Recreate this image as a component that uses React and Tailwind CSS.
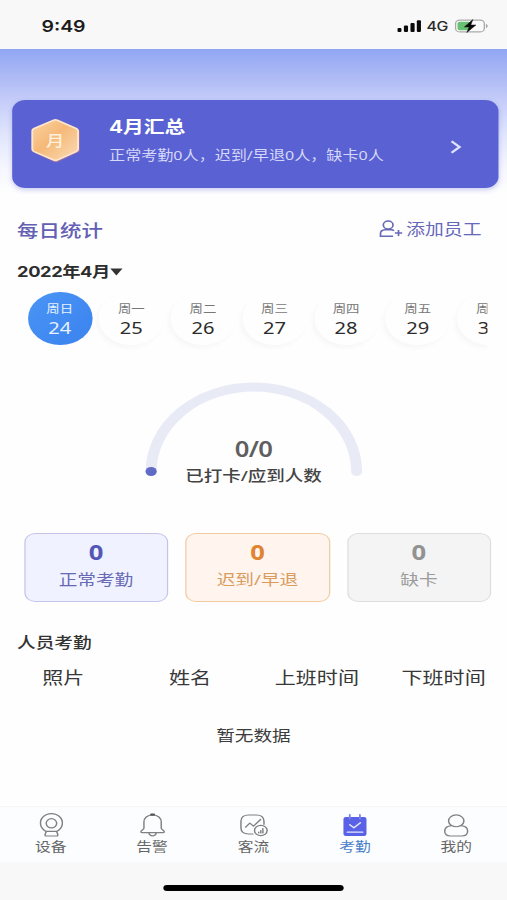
import React from "react";

const days = [
  ["周日", "24"],
  ["周一", "25"],
  ["周二", "26"],
  ["周三", "27"],
  ["周四", "28"],
  ["周五", "29"],
  ["周六", "30"],
];

const stats = [
  { n: "0", label: "正常考勤", box: "border-[#c3c4e6] bg-[#f0f2ff]", num: "text-[#5358b8]", text: "text-[#6769b5]" },
  { n: "0", label: "迟到/早退", box: "border-[#f0cba0] bg-[#fff4ee]", num: "text-[#e08432]", text: "text-[#d99c5e]" },
  { n: "0", label: "缺卡", box: "border-[#dedede] bg-[#f4f4f4]", num: "text-[#929292]", text: "text-[#9c9c9c]" },
];

function StatusBar() {
  return (
    <div className="flex h-[49px] shrink-0 items-center justify-between bg-[#f8f8f8] pt-[3px] pr-[15px] pl-[34px]">
      <span className="font-['Inter',sans-serif] text-[16px] font-semibold text-[#1c1c1c]">9:49</span>
      <div className="flex items-center">
        <svg width="20" height="12" viewBox="0 0 20 12" fill="#0a0a0a">
          <rect x="0" y="8" width="3.4" height="4" rx="1" />
          <rect x="5.4" y="5.5" width="3.4" height="6.5" rx="1" />
          <rect x="10.8" y="3" width="3.4" height="9" rx="1" />
          <rect x="16" y="0.3" width="3.4" height="11.7" rx="1" />
        </svg>
        <span className="ml-[4px] w-[18px] pt-px font-['Inter',sans-serif] text-[13px] leading-none font-medium tracking-[-0.3px] text-[#2a2a2a]">4G</span>
        <svg className="ml-[5px]" width="28" height="14" viewBox="0 0 28 14">
          <rect x="0.8" y="1.1" width="23.6" height="11.8" rx="3.4" fill="#fafafa" stroke="#a9a9a9" strokeWidth="1.1" />
          <rect x="2.4" y="2.7" width="11" height="8.6" rx="1.8" fill="#67c173" />
          <path d="M25.7 5v4c.9-.3 1.4-1.1 1.4-2s-.5-1.7-1.4-2z" fill="#a0a0a0" />
          <path d="M15 .6 8 8h4L10 13.6l7.5-7.6h-4.2z" fill="#0a0a0a" stroke="#0a0a0a" strokeWidth=".4" />
        </svg>
      </div>
    </div>
  );
}

function Hexagon() {
  return (
    <svg width="42" height="46" viewBox="0 0 42 46">
      <defs>
        <linearGradient id="hex" x1="0" y1="0" x2="1" y2="1">
          <stop offset="0" stopColor="#fbd3a2" />
          <stop offset="0.45" stopColor="#f5b978" />
          <stop offset="1" stopColor="#fbdcb8" />
        </linearGradient>
      </defs>
      <path d="M21 3 39.5 12q1 .5 1 2v18q0 1.5-1 2L22.5 44q-1.5.7-3 0L3.500 35z" fill="#b0708f" opacity=".75" />
      <path d="M19 2.300q1.500-.8 3 0L37.500 10.500q1.500.8 1.500 2.300v18.500q0 1.500-1.500 2.300L22 42q-1.500.8-3 0L3 33.600q-1.500-.8-1.500-2.300V12.800q0-1.500 1.500-2.300z" fill="url(#hex)" stroke="#fde6cb" strokeWidth="1.6" />
      <text x="20.2" y="28" textAnchor="middle" fontSize="15" fontWeight="500" fill="#fff0dc" fontFamily="'Noto Sans CJK SC', sans-serif">月</text>
    </svg>
  );
}

function SummaryCard() {
  return (
    <div className="mr-[7.5px] ml-[9.5px] flex h-[88px] shrink-0 items-center rounded-[11px] bg-[#5a61d2] pl-[15px] shadow-[0_2px_5px_rgba(90,97,210,0.3)]">
      <div className="-mt-[6px]">
        <Hexagon />
      </div>
      <div className="-mt-[8px] ml-[23px] flex flex-1 flex-col">
        <span className="font-['Inter','Noto_Sans_CJK_SC',sans-serif] text-[17px] leading-[26px] font-bold text-white">4月汇总</span>
        <span className="mt-[3px] text-[13.2px] leading-[24px] whitespace-nowrap text-[#d5d8f8]">正常考勤0人，迟到/早退0人，缺卡0人</span>
      </div>
      <svg className="mt-[5px] mr-[30px]" width="10" height="14" viewBox="0 0 10 14" fill="none" stroke="#dfe2fb" strokeWidth="2.2">
        <path d="M1.5 1.2 8 7l-6.5 5.8" />
      </svg>
    </div>
  );
}

function AddStaff() {
  return (
    <div className="flex items-center text-[#6668b8]">
      <svg className="-mt-[3px]" width="20" height="18" viewBox="0 0 20 18" fill="none" stroke="currentColor" strokeWidth="1.4">
        <circle cx="7.5" cy="5" r="4" />
        <path d="M11.5 16.3H1.2v-2.6q0-3.700 3.700-3.900l5 0q1.500.1 2.300 1M16 10v6M13 13h6" />
      </svg>
      <span className="ml-[2px] text-[15.4px] leading-[24px]">添加员工</span>
    </div>
  );
}

function DayStrip() {
  return (
    <div className="mr-[16px] ml-[22.5px] flex h-[64px] shrink-0 gap-[5.75px] overflow-hidden">
      {days.map(([w, d], i) => (
        <div
          key={d}
          className={
            "flex h-[53px] w-[53px] shrink-0 flex-col items-center rounded-full pt-[9px] " +
            (i === 0 ? "bg-linear-to-br from-[#4a95f6] to-[#3b82ee] text-[#e8f2ff]" : "text-[#2c2c2c] shadow-[-2px_3px_5px_rgba(0,0,0,0.03)]")
          }
        >
          <span className={"text-[11px] leading-[16px] " + (i === 0 ? "" : "text-[#777]")}>{w}</span>
          <span className="mt-[1px] text-[16.5px] leading-[20px]">{d}</span>
        </div>
      ))}
    </div>
  );
}

function Gauge() {
  return (
    <div className="grid h-[110px] shrink-0 justify-center">
      <svg className="col-start-1 row-start-1" width="184" height="110" viewBox="0 0 184 110">
        <path d="M8 92.5a84.3 84.5 0 0 1 168.6 0" fill="none" stroke="#e8eaf6" strokeWidth="9" strokeLinecap="round" />
        <circle cx="8" cy="92.5" r="4.6" fill="#5f6bc4" />
      </svg>
      <div className="col-start-1 row-start-1 flex flex-col items-center pt-[57px]">
        <span className="text-[21px] leading-[26px] font-semibold tracking-[-0.5px] text-[#5f5f5f]">0/0</span>
        <span className="mt-[1px] text-[15.2px] leading-[24px] font-medium text-[#444]">已打卡/应到人数</span>
      </div>
    </div>
  );
}

function TabIcon({ name }) {
  const p = { width: 26, height: 26, viewBox: "0 0 26 26", fill: "none", stroke: "#808080", strokeWidth: 1.2, strokeLinejoin: "round", strokeLinecap: "round" };
  if (name === "设备")
    return (
      <svg {...p}>
        <path d="M8.600 19.300A9 9.500 0 1 1 17.800 19.300" />
        <ellipse cx="13.2" cy="11.3" rx="4.3" ry="4.6" />
        <path d="M9 19.300h8.400l1 3.200q.3 1.500-1 1.500H9q-1.300 0-1-1.500z" />
      </svg>
    );
  if (name === "告警")
    return (
      <svg {...p}>
        <path d="M13.200 3c-4.400 0-7.100 3-7.100 7v6c0 1.500-2.500 2.400-2.500 3.700 0 .6.500.9 1.200.9h16.800c.7 0 1.200-.3 1.200-.9 0-1.300-2.500-2.200-2.500-3.700V10c0-4-2.700-7-7.100-7z" />
        <path d="M10.200 20.600q.4 3.300 3 3.300t3-3.300" />
        <path d="M12.200 2.600h2" strokeWidth="2.2" stroke="#555" />
      </svg>
    );
  if (name === "客流")
    return (
      <svg {...p}>
        <path d="M12.500 22H9q-6.300 0-6.300-6.300V9.300Q2.700 3 9 3h6.300q6.300 0 6.300 6.300v3" />
        <path d="m6.500 15.200 3.500-4 3 3 5.800-6.700" />
        <circle cx="19" cy="18.5" r="5.2" />
        <path d="M17.300 20v1M19 18.500V21M20.700 16.500V21" />
      </svg>
    );
  if (name === "考勤")
    return (
      <svg {...p}>
        <rect x="3.8" y="5" width="18.9" height="19" rx="2" fill="#5961e6" stroke="none" />
        <path d="M9 2.700v4M17.300 2.700v4" stroke="#7c82ee" strokeWidth="1.5" />
        <path d="m9 12.800 3.400 3 5.300-5M7 20.200h12.600" stroke="#e4e6ff" strokeWidth="1.3" />
      </svg>
    );
  return (
    <svg {...p}>
      <path d="M9.400 13.600a6.300 6 0 1 1 7.900 0c3.400.4 5.400 2.500 5.400 5.400 0 3-1.800 5-4.700 5H8.600c-2.900 0-4.700-2-4.700-5 0-2.900 2.200-5 5.500-5.400z" />
      <path d="M9.400 13.600q4 2.300 7.900 0" />
    </svg>
  );
}

export default function App() {
  return (
    <div className="h-[900px] w-[507px] overflow-hidden bg-[#fefefe]">
      {/* A 416px wide phone layout, widened to fill the window */}
      <div className="flex h-[900px] w-[416px] origin-top-left scale-x-[1.21875] flex-col font-['Noto_Sans','Noto_Sans_CJK_SC',sans-serif]">
        <StatusBar />
        <div className="flex flex-1 flex-col bg-[linear-gradient(to_bottom,#91a6f3_0px,#adbaf5_28px,#c5cdf9_52px,#e0e5fc_85px,#f6f7fe_120px,#fefefe_145px)] pt-[51px]">
          <SummaryCard />
          <div className="mt-[28px] flex h-[28px] shrink-0 items-center justify-between pr-[21px] pl-[14px]">
            <h2 className="text-[17.6px] leading-[28px] font-medium text-[#6360b4]">每日统计</h2>
            <AddStaff />
          </div>
          <div className="mt-[16px] mb-[8px] flex h-[24px] shrink-0 items-center pl-[14px]">
            <span className="font-['Inter','Noto_Sans_CJK_SC',sans-serif] text-[15px] font-bold tracking-[-0.35px] text-[#2d2d2d]">2022年4月</span>
            <svg width="11" height="8" viewBox="0 0 11 8" fill="#333">
              <path d="M.5.5h10L5.500 7.500z" />
            </svg>
          </div>
          <DayStrip />
          <div className="h-[23px] shrink-0" />
          <Gauge />
          <div className="mt-[44px] flex shrink-0 gap-[14px] pl-[19.5px]">
            {stats.map((s) => (
              <div key={s.label} className={"flex h-[69px] w-[118.5px] flex-col items-center rounded-[9px] border pt-[5px] " + s.box}>
                <span className={"text-[21px] leading-[26px] font-bold " + s.num}>{s.n}</span>
                <span className={"mt-[2px] text-[15.3px] leading-[24px] " + s.text}>{s.label}</span>
              </div>
            ))}
          </div>
          <h3 className="mt-[28px] pl-[14px] text-[15.3px] leading-[24px] font-medium text-[#333]">人员考勤</h3>
          <div className="mt-[11px] grid grid-cols-4 text-center text-[17.3px] leading-[26px] text-[#383838]">
            {["照片", "姓名", "上班时间", "下班时间"].map((t) => (
              <span key={t}>{t}</span>
            ))}
          </div>
          <p className="mt-[32px] text-center text-[15.3px] leading-[24px] text-[#3c3c3c]">暂无数据</p>
        </div>
        <nav className="grid h-[56px] shrink-0 grid-cols-5 border-t border-[#f3f5f6] bg-[#fbfdff] pt-[5px]">
          {["设备", "告警", "客流", "考勤", "我的"].map((t) => (
            <div key={t} className="flex flex-col items-center">
              <TabIcon name={t} />
              <span className={"-mt-[1px] text-[12.9px] leading-[18px] " + (t === "考勤" ? "text-[#4a80c8]" : "text-[#666]")}>{t}</span>
            </div>
          ))}
        </nav>
        <div className="flex h-[38px] shrink-0 justify-center bg-[#f8f8f8] pt-[23px]">
          <div className="h-[6px] w-[148px] rounded-full bg-black" />
        </div>
      </div>
    </div>
  );
}
